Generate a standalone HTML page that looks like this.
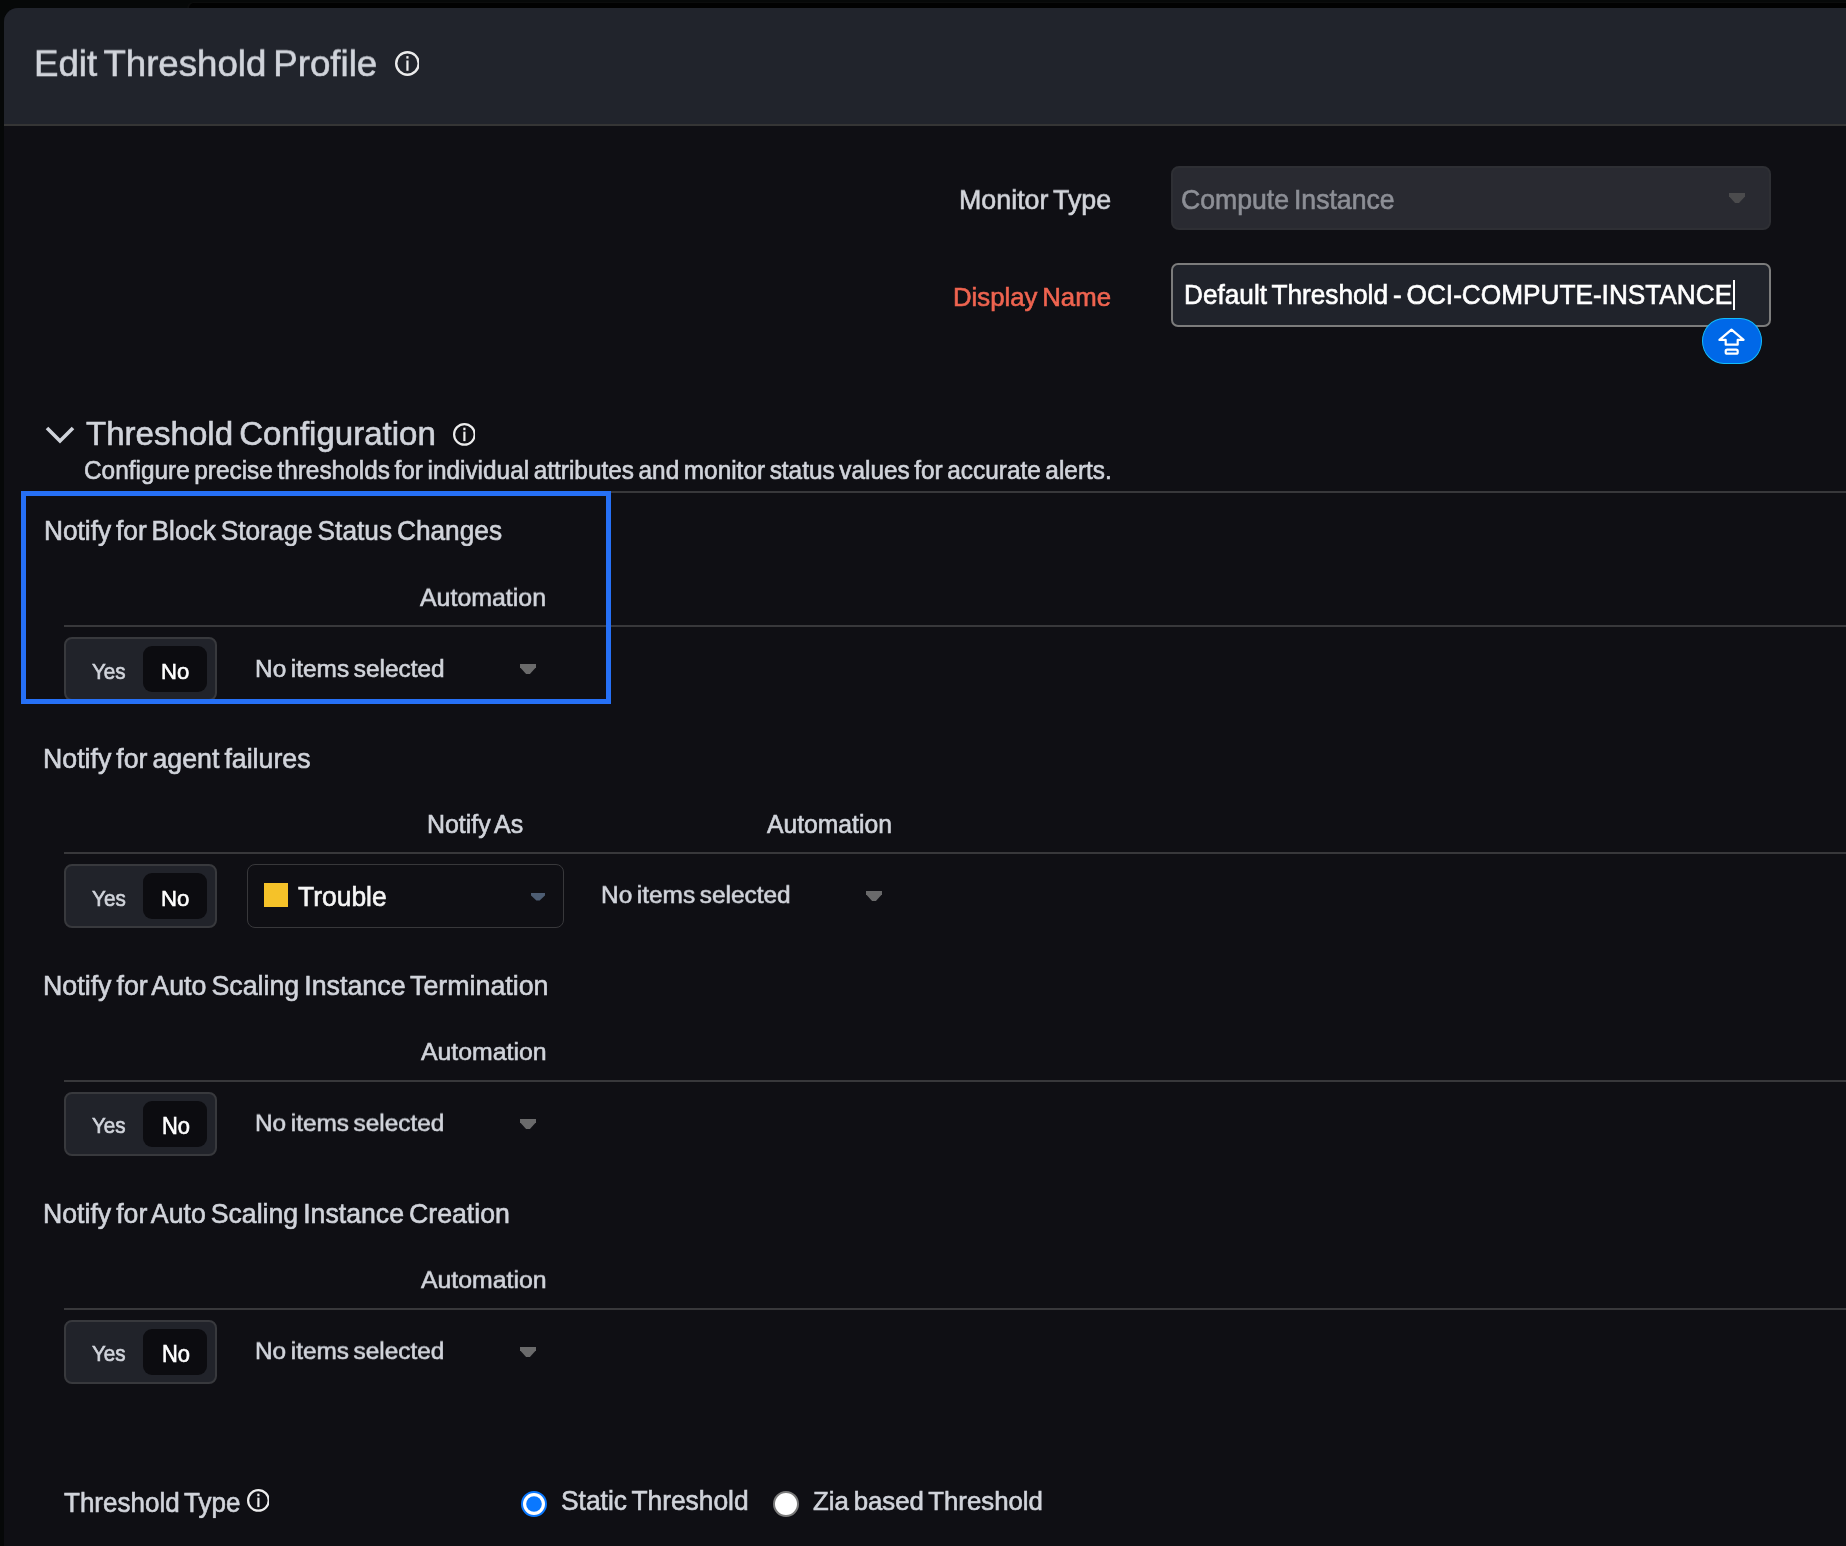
<!DOCTYPE html>
<html><head><meta charset="utf-8"><title>Edit Threshold Profile</title>
<style>
html,body{margin:0;padding:0}
body{width:1846px;height:1546px;background:#060808;position:relative;overflow:hidden;font-family:"Liberation Sans",sans-serif}
.a{position:absolute;display:block}
.t{position:absolute;line-height:1;white-space:nowrap;will-change:transform;-webkit-text-stroke:0.6px currentColor;word-spacing:-0.09em}
</style></head><body>
<div class="a" style="left:187px;top:2px;width:1659px;height:6px;background:#0b0c0c;border-top-left-radius:6px"></div>
<div class="a" style="left:189px;top:3px;width:1657px;height:5px;background:#010101;border-top-left-radius:5px"></div>
<div class="a" style="left:4px;top:8px;width:1842px;height:1538px;background:#0f0f14;border-top-left-radius:14px;overflow:hidden"></div>
<div class="a" style="left:4px;top:8px;width:1842px;height:116px;background:#21242c;border-top-left-radius:14px"></div>
<div class="a" style="left:4px;top:124px;width:1842px;height:2px;background:#353535"></div>
<div class="t" style="left:33.86px;top:45.80px;font-size:36.668px;color:#d1d4db;transform-origin:0 30.98px;transform:scaleY(0.9863)">Edit Threshold Profile</div>
<svg class="a" style="left:394.55px;top:51.30px" width="24.90" height="24.90" viewBox="0 0 24.90 24.90"><circle cx="12.45" cy="12.45" r="11.25" fill="none" stroke="#ececec" stroke-width="2.4"/><rect x="11.35" y="5.10" width="2.2" height="2.5" fill="#ececec"/><rect x="11.35" y="9.46" width="2.2" height="10.33" fill="#ececec"/></svg>
<div class="t" style="left:958.71px;top:186.90px;font-size:26.839px;color:#d3d5db;transform-origin:0 22.68px;transform:scaleY(0.9898)">Monitor Type</div>
<div class="a" style="left:1171px;top:166px;width:600px;height:64px;background:#292a31;border:2px solid #2e2f34;border-radius:8px;box-sizing:border-box"></div>
<div class="t" style="left:1180.70px;top:187.16px;font-size:26.629px;color:#8d8f96;transform-origin:0 22.50px;transform:scaleY(1.0674)">Compute Instance</div>
<svg class="a" style="left:1729.00px;top:193.00px" width="16.10" height="10.00" viewBox="0 0 16.10 10.00"><polygon points="0,0 16.10,0 16.10,3.30 9.98,10.00 6.12,10.00 0,3.30" fill="#4b4b4d"/></svg>
<div class="t" style="left:953.28px;top:284.77px;font-size:25.763px;color:#ef6450;transform-origin:0 21.77px;transform:scaleY(1.0112)">Display Name</div>
<div class="a" style="left:1171px;top:263px;width:600px;height:64px;background:#20232b;border:2px solid #7c7c7c;border-radius:7px;box-sizing:border-box"></div>
<div class="t" style="left:1184.25px;top:282.25px;font-size:26.213px;color:#ffffff;transform-origin:0 22.15px;transform:scaleY(1.0778)">Default Threshold - OCI-COMPUTE-INSTANCE</div>
<div class="a" style="left:1733px;top:280px;width:2px;height:30px;background:#ffffff"></div>
<div class="a" style="left:1702px;top:318px;width:60px;height:46px;background:#0068e8;border:1.6px solid #12bdfd;border-radius:22px/23px;box-sizing:border-box"></div>
<svg class="a" style="left:1702px;top:318px" width="60" height="46" viewBox="0 0 60 46"><path d="M29.5 11.6 L41.6 21.9 L35.7 21.9 L35.7 26.7 L23.7 26.7 L23.7 21.9 L17.4 21.9 Z" fill="none" stroke="#ffffff" stroke-width="2.2" stroke-linejoin="round"/><rect x="23.7" y="31.7" width="12" height="4" rx="1.5" fill="none" stroke="#ffffff" stroke-width="2.2"/></svg>
<svg class="a" style="left:44px;top:424px" width="32" height="22" viewBox="0 0 32 22"><polyline points="3,4 16,17 29,4" fill="none" stroke="#cfd3da" stroke-width="3.6" stroke-linejoin="miter"/></svg>
<div class="t" style="left:85.86px;top:417.18px;font-size:33.078px;color:#d1d4db;transform-origin:0 27.95px;transform:scaleY(1.0119)">Threshold Configuration</div>
<svg class="a" style="left:452.60px;top:423.20px" width="22.80" height="22.80" viewBox="0 0 22.80 22.80"><circle cx="11.40" cy="11.40" r="10.30" fill="none" stroke="#ececec" stroke-width="2.2"/><rect x="10.30" y="4.67" width="2.2" height="2.5" fill="#ececec"/><rect x="10.30" y="8.66" width="2.2" height="9.46" fill="#ececec"/></svg>
<div class="t" style="left:83.85px;top:458.60px;font-size:24.383px;color:#d1d4db;transform-origin:0 20.60px;transform:scaleY(1.0245)">Configure precise thresholds for individual attributes and monitor status values for accurate alerts.</div>
<div class="a" style="left:21px;top:491px;width:1825px;height:2px;background:#38383b"></div>
<div class="t" style="left:43.91px;top:517.82px;font-size:26.252px;color:#d1d4db;transform-origin:0 22.18px;transform:scaleY(1.0322)">Notify for Block Storage Status Changes</div>
<div class="t" style="left:420.48px;top:585.05px;font-size:24.921px;color:#d1d4db;transform-origin:0 21.06px;transform:scaleY(0.9636)">Automation</div>
<div class="a" style="left:64px;top:625px;width:1782px;height:2px;background:#38383b"></div>
<div class="a" style="left:64px;top:637px;width:153px;height:64px;background:#21232a;border:2px solid #38393d;border-radius:8px;box-sizing:border-box"></div>
<div class="a" style="left:143px;top:646px;width:64px;height:46px;background:#0c0c10;border-radius:9px"></div>
<div class="t" style="left:92.25px;top:661.51px;font-size:20.652px;color:#d1d4db;transform-origin:0 17.45px;transform:scaleY(1.0779)">Yes</div>
<div class="t" style="left:161.31px;top:660.97px;font-size:22.096px;color:#ffffff;transform-origin:0 18.67px;transform:scaleY(1.0381)">No</div>
<div class="t" style="left:254.50px;top:656.85px;font-size:24.413px;color:#d1d4db;transform-origin:0 20.63px;transform:scaleY(1.0177)">No items selected</div>
<svg class="a" style="left:520.00px;top:663.90px" width="16.00" height="9.90" viewBox="0 0 16.00 9.90"><polygon points="0,0 16.00,0 16.00,3.27 9.92,9.90 6.08,9.90 0,3.27" fill="#6a6a6b"/></svg>
<div class="t" style="left:43.35px;top:745.96px;font-size:26.725px;color:#d1d4db;transform-origin:0 22.58px;transform:scaleY(1.046)">Notify for agent failures</div>
<div class="t" style="left:767.24px;top:813.11px;font-size:24.694px;color:#d1d4db;transform-origin:0 20.87px;transform:scaleY(1.0323)">Automation</div>
<div class="a" style="left:64px;top:852px;width:1782px;height:2px;background:#38383b"></div>
<div class="a" style="left:64px;top:864px;width:153px;height:64px;background:#21232a;border:2px solid #38393d;border-radius:8px;box-sizing:border-box"></div>
<div class="a" style="left:143px;top:873px;width:64px;height:46px;background:#0c0c10;border-radius:9px"></div>
<div class="t" style="left:92.02px;top:889.03px;font-size:20.692px;color:#d1d4db;transform-origin:0 17.48px;transform:scaleY(1.0886)">Yes</div>
<div class="t" style="left:161.46px;top:887.73px;font-size:22.143px;color:#ffffff;transform-origin:0 18.71px;transform:scaleY(1.0286)">No</div>
<div class="t" style="left:600.98px;top:883.32px;font-size:24.43px;color:#d1d4db;transform-origin:0 20.64px;transform:scaleY(0.9908)">No items selected</div>
<div class="t" style="left:426.78px;top:812.16px;font-size:24.939px;color:#d1d4db;transform-origin:0 21.07px;transform:scaleY(1.0063)">Notify As</div>
<div class="a" style="left:247px;top:864px;width:317px;height:64px;border:1px solid #38383b;border-radius:8px;box-sizing:border-box"></div>
<div class="a" style="left:264px;top:883px;width:24px;height:24px;background:#f5c229"></div>
<div class="t" style="left:298.32px;top:883.78px;font-size:26.447px;color:#f5f5f5;transform-origin:0 22.35px;transform:scaleY(1.0678)">Trouble</div>
<svg class="a" style="left:531.10px;top:893.10px" width="14.00" height="7.60" viewBox="0 0 14.00 7.60"><polygon points="0,0 14.00,0 14.00,2.51 8.68,7.60 5.32,7.60 0,2.51" fill="#4d5d73"/></svg>
<svg class="a" style="left:866.00px;top:891.40px" width="16.00" height="9.90" viewBox="0 0 16.00 9.90"><polygon points="0,0 16.00,0 16.00,3.27 9.92,9.90 6.08,9.90 0,3.27" fill="#6a6a6b"/></svg>
<div class="t" style="left:42.98px;top:973.33px;font-size:26.792px;color:#d1d4db;transform-origin:0 22.64px;transform:scaleY(1.0646)">Notify for Auto Scaling Instance Termination</div>
<div class="t" style="left:420.76px;top:1039.69px;font-size:24.847px;color:#d1d4db;transform-origin:0 21.00px;transform:scaleY(0.9983)">Automation</div>
<div class="a" style="left:64px;top:1080px;width:1782px;height:2px;background:#38383b"></div>
<div class="a" style="left:64px;top:1092px;width:153px;height:64px;background:#21232a;border:2px solid #38393d;border-radius:8px;box-sizing:border-box"></div>
<div class="a" style="left:143px;top:1101px;width:64px;height:46px;background:#0c0c10;border-radius:9px"></div>
<div class="t" style="left:92.24px;top:1116.43px;font-size:20.632px;color:#d1d4db;transform-origin:0 17.43px;transform:scaleY(1.0979)">Yes</div>
<div class="t" style="left:161.96px;top:1115.78px;font-size:21.93px;color:#ffffff;transform-origin:0 18.53px;transform:scaleY(1.051)">No</div>
<div class="t" style="left:254.51px;top:1111.12px;font-size:24.382px;color:#d1d4db;transform-origin:0 20.60px;transform:scaleY(0.9699)">No items selected</div>
<svg class="a" style="left:520.00px;top:1119.10px" width="16.00" height="9.90" viewBox="0 0 16.00 9.90"><polygon points="0,0 16.00,0 16.00,3.27 9.92,9.90 6.08,9.90 0,3.27" fill="#6a6a6b"/></svg>
<div class="t" style="left:43.01px;top:1201.33px;font-size:26.688px;color:#d1d4db;transform-origin:0 22.55px;transform:scaleY(1.0246)">Notify for Auto Scaling Instance Creation</div>
<div class="t" style="left:420.69px;top:1267.97px;font-size:24.832px;color:#d1d4db;transform-origin:0 20.98px;transform:scaleY(0.9866)">Automation</div>
<div class="a" style="left:64px;top:1308px;width:1782px;height:2px;background:#38383b"></div>
<div class="a" style="left:64px;top:1320px;width:153px;height:64px;background:#21232a;border:2px solid #38393d;border-radius:8px;box-sizing:border-box"></div>
<div class="a" style="left:143px;top:1329px;width:64px;height:46px;background:#0c0c10;border-radius:9px"></div>
<div class="t" style="left:92.24px;top:1344.43px;font-size:20.632px;color:#d1d4db;transform-origin:0 17.43px;transform:scaleY(1.0979)">Yes</div>
<div class="t" style="left:161.96px;top:1343.78px;font-size:21.93px;color:#ffffff;transform-origin:0 18.53px;transform:scaleY(1.051)">No</div>
<div class="t" style="left:254.51px;top:1339.00px;font-size:24.382px;color:#d1d4db;transform-origin:0 20.60px;transform:scaleY(0.9803)">No items selected</div>
<svg class="a" style="left:520.00px;top:1347.10px" width="16.00" height="9.90" viewBox="0 0 16.00 9.90"><polygon points="0,0 16.00,0 16.00,3.27 9.92,9.90 6.08,9.90 0,3.27" fill="#6a6a6b"/></svg>
<div class="a" style="left:21px;top:491px;width:590px;height:213px;border:5px solid #2670f6;box-sizing:border-box"></div>
<div class="t" style="left:64.42px;top:1489.84px;font-size:26.009px;color:#d1d4db;transform-origin:0 21.98px;transform:scaleY(1.0276)">Threshold Type</div>
<svg class="a" style="left:246.60px;top:1489.30px" width="22.80" height="22.80" viewBox="0 0 22.80 22.80"><circle cx="11.40" cy="11.40" r="10.30" fill="none" stroke="#ececec" stroke-width="2.2"/><rect x="10.30" y="4.67" width="2.2" height="2.5" fill="#ececec"/><rect x="10.30" y="8.66" width="2.2" height="9.46" fill="#ececec"/></svg>
<svg class="a" style="left:521px;top:1491px" width="26" height="26" viewBox="0 0 26 26"><circle cx="13" cy="13" r="12" fill="#ffffff" stroke="#0a78ff" stroke-width="2"/><circle cx="13" cy="13" r="7.8" fill="#0a78ff"/></svg>
<div class="t" style="left:561.12px;top:1487.80px;font-size:26.361px;color:#d1d4db;transform-origin:0 22.28px;transform:scaleY(1.0175)">Static Threshold</div>
<svg class="a" style="left:773px;top:1491px" width="26" height="26" viewBox="0 0 26 26"><circle cx="13" cy="13" r="12" fill="#ffffff" stroke="#7a7a7a" stroke-width="2"/></svg>
<div class="t" style="left:812.89px;top:1488.63px;font-size:25.799px;color:#d1d4db;transform-origin:0 21.80px;transform:scaleY(1.0325)">Zia based Threshold</div>
</body></html>
